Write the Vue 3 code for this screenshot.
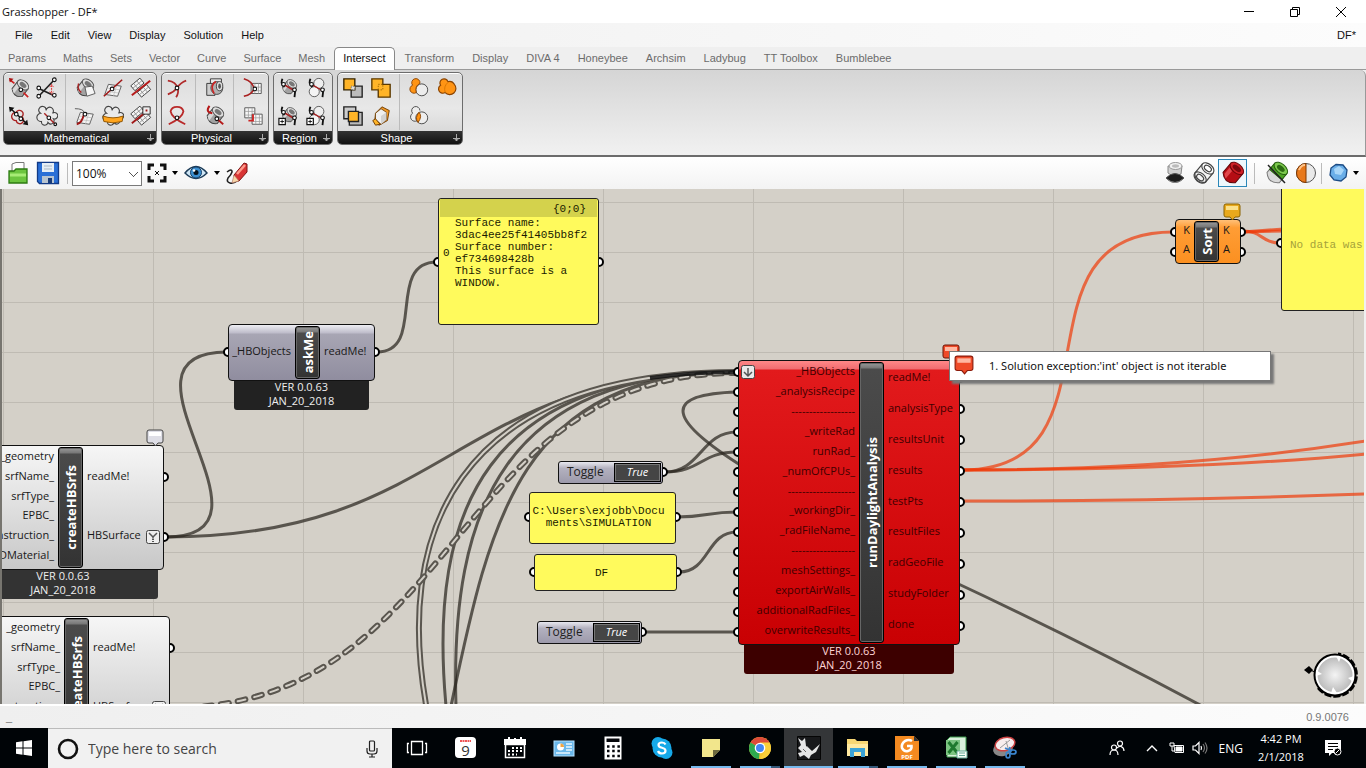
<script setup>
import { ref } from 'vue'

const menus = ['File', 'Edit', 'View', 'Display', 'Solution', 'Help']
const tabs = ['Params', 'Maths', 'Sets', 'Vector', 'Curve', 'Surface', 'Mesh', 'Intersect', 'Transform', 'Display', 'DIVA 4', 'Honeybee', 'Archsim', 'Ladybug', 'TT Toolbox', 'Bumblebee']
const activeTab = ref('Intersect')
const zoom = ref('100%')
const search = ref('')

/* Shared drawing fragments for the 24 x 24 ribbon icons */
const dot = (x, y, r = 2) => `<circle cx="${x}" cy="${y}" r="${r}" fill="#fff" stroke="#111" stroke-width="1.2"/>`
const tube = '<g transform="rotate(38 12 12)"><path d="M5 6v11q7 7 14 0V6z" fill="#a2a2a2" stroke="#444"/><path d="M6 9v8q2 2 4 3V9z" fill="#d8d8d8"/><ellipse cx="12" cy="6.500" rx="7" ry="4.500" fill="#dedede" stroke="#555"/><ellipse cx="12" cy="6.500" rx="4.200" ry="2.500" fill="#777"/></g>'
const sheet = '<path d="M7 8 L21 10 L17 21 L3 19Z" fill="#f4f4f4" stroke="#555"/><path d="M11.500 8.500 L8 20 M16 9.500 L12.500 20.500 M5.500 12 L19.500 14 M4.500 15.500 L18 17.500" stroke="#bbb" stroke-width=".8"/>'
const puff = '<path d="M5 9 a4 4 0 1 1 6 -3 a4 4 0 1 1 7 3 a3.500 3.500 0 1 1 1 6 a3.500 3.500 0 1 1 -6 4 a3.500 3.500 0 1 1 -7 -1 a3.500 3.500 0 1 1 -1 -9Z" fill="#e9e9e9" stroke="#444" stroke-width="1.200"/>'
const checks = '<g transform="rotate(50 12 12)"><path d="M3 6h7v13H3zM13 5h7v13h-7z" fill="#f5f5f5" stroke="#444"/><path d="M6.500 6v13M3 10.500h7M3 15h7M16.500 5v13M13 9.500h7M13 14h7" stroke="#8f8f8f" stroke-width=".9"/></g>'
const grid = (x, y) => `<path d="M${x} ${y}h11v11h-11z" fill="#f7f7f7" stroke="#555"/><path d="M${x + 4} ${y}v11M${x + 8} ${y}v11M${x} ${y + 4}h11M${x} ${y + 8}h11" stroke="#999" stroke-width=".8"/>`
const plus = '<path d="M1 14.500h7v7H1z" fill="#fff" stroke="#111" stroke-width="1.300"/><path d="M4.500 16v4M2.500 18h4" stroke="#111"/>'

const art = {
  lineTube: `<g transform="translate(1 1)">${tube}</g><path d="M2 3l5 4M17 17l5 5" stroke="#c22" stroke-width="1.800"/><path d="M1 1l5 1-4 4z" fill="#a11"/>${dot(14, 14)}`,
  lineLine: `<path d="M2 12L21 21M3 21L20 3" stroke="#222" stroke-width="1.800"/><path d="M17 9v9M15 11l2-3 2 3M15 16l2 3 2-3" stroke="#d22" stroke-dasharray="2 1"/>${dot(3, 12)}${dot(20, 3)}${dot(3, 21)}${dot(20, 20)}`,
  curveLine: `<path d="M9 8a4 4 0 1 1 6 5a4 4 0 1 1-6 4a4 4 0 1 1-1-9" stroke="#a22" stroke-width="1.500"/><path d="M3 4L20 20" stroke="#111" stroke-width="1.500"/><path d="M1 2l6 1-5 5zM22 22l-6-1 5-5z" fill="#111"/>${dot(9, 10)}${dot(14, 15)}`,
  puffLine: `${puff}<path d="M9 9L21 21" stroke="#a22" stroke-width="1.500"/>${dot(14, 14)}${dot(21, 21, 1.5)}`,
  tubePlane: `${tube}<path d="M12 11l8-1 3 8-9 3z" fill="#f5f5f5" stroke="#555"/><path d="M5 7q-2 6 3 10" stroke="#a22" stroke-width="1.500"/>`,
  planeLine: `${sheet}<path d="M2 21L22 3" stroke="#a01818" stroke-width="1.800"/>${dot(11, 13)}`,
  planeRegion: `${checks}<path d="M2 20L22 4" stroke="#b51a1a" stroke-width="2.200"/>`,
  planeCurve: `${sheet}<path d="M1 4Q10 4 11 8" stroke="#555"/><path d="M3 21Q9 20 11 9" stroke="#a01818" stroke-width="2"/>${dot(12, 10)}`,
  contour: `${puff}<path d="M1 12q11 4 22 0l-1 6q-10 3-20 0z" fill="#ffa51e" stroke="#8d5300"/>`,
  planeBox: `${checks}<path d="M2 20L18 7" stroke="#a01818" stroke-width="2"/><path d="M14 2h8v8h-8z" fill="#eee" stroke="#222"/><path d="M17 6h2" stroke="#a01818" stroke-width="2"/>`,
  curveCurve: `<path d="M2 4Q11 5 13 13Q14 18 11 22M22 4Q16 6 12 12Q8 17 2 19" stroke="#b02a2a" stroke-width="1.900"/>${dot(12, 12)}`,
  curveSelf: `<path d="M3 21Q18 14 19 7Q18 2 12 2Q6 2 5 7Q6 14 21 21" stroke="#b92a2a" stroke-width="2"/>${dot(12, 14)}`,
  brepBrep: `<path d="M7 2h12v14H7z" fill="#e9e9e9" stroke="#333"/><path d="M3 7h9v13H3z" fill="#cfcfcf" stroke="#333"/><ellipse cx="14" cy="12" rx="6.500" ry="7" fill="#b0b0b0" stroke="#444"/><ellipse cx="17" cy="10" rx="3.500" ry="5" fill="#ddd" stroke="#444"/><ellipse cx="17" cy="10" rx="1.500" ry="3" fill="#555"/><path d="M13 5q-7 4-2 13" stroke="#c22" stroke-width="1.800"/>`,
  brepCurve: `${tube}<path d="M6 1Q1 8 9 9" stroke="#b51a1a" stroke-width="2.200"/><path d="M14 15L21 21" stroke="#b51a1a" stroke-width="2"/>${dot(14, 15)}`,
  surfCurve: `${grid(10, 7)}<path d="M2 2Q12 5 13 13Q11 19 2 21" stroke="#a92020" stroke-width="1.800"/>${dot(14, 13)}`,
  surfSurf: `${grid(3, 3)}${grid(11, 10)}<path d="M12 10v7h-5" stroke="#c22" stroke-width="2"/>`,
  split: `<g transform="translate(2 1) scale(.85)">${tube}</g><path d="M5 2q-3 4 2 9M19 13l-1 9" stroke="#111" stroke-width="2"/><path d="M6 8l12 7" stroke="#a22" stroke-width="1.800"/>${dot(6, 8)}${dot(18, 14)}`,
  splitMulti: `<circle cx="14" cy="7" r="5.500" fill="#eee" stroke="#555"/><circle cx="9" cy="16" r="5.500" fill="#f4f4f4" stroke="#555"/><path d="M5 2q-3 4 2 9M19 13l-1 9" stroke="#111" stroke-width="2"/><path d="M6 8l12 7" stroke="#a22" stroke-width="1.500"/>${dot(6, 8)}${dot(18, 14)}`,
  diff: `<path d="M10 10h12v12H10z" fill="#bcbcbc" stroke="#222" stroke-width="1.500"/><path d="M2 2h12v12H2z" fill="#ffb427" stroke="#332200" stroke-width="1.500"/><path d="M10 10h4v4h-4z" fill="#ddd" stroke="#666" stroke-dasharray="1 1"/>`,
  union: `<path d="M2 2h12v6h8v14H9v-8H2z" fill="#ffb427" stroke="#5b3900" stroke-width="1.500"/><path d="M9 14V8h5v6z" stroke="#9a6500" stroke-dasharray="1.500 1.500"/>`,
  inter: `<path d="M2 2h13v13H2z" fill="#ccc" stroke="#222" stroke-width="1.500"/><path d="M8 8h14v14H8z" fill="#bbb" stroke="#222" stroke-width="1.500"/><path d="M7 7h11v11H7z" fill="#ffb427" stroke="#222" stroke-width="1.500"/>`,
  box: `<path d="M13 2l8 4-2 11-9 5-5-3 1-10z" fill="#f39a26" stroke="#6b3900"/><path d="M6 9l6-5 6 4v8l-6 5-6-5z" fill="#efefef" stroke="#7a4a10"/><path d="M12 12l6-4v8l-6 5z" fill="#d2d2d2"/><path d="M3 17l3-2 5 6-5 1z" fill="#ffb427" stroke="#6b3900"/>`,
  regDiff: `<circle cx="15" cy="14" r="6.500" fill="#ececec" stroke="#444"/><path d="M9 17a4.500 4.500 0 1 1-4-8a4.500 4.500 0 1 1 8-2q-6 3-4 10z" fill="#ff9414" stroke="#8a4300"/>`,
  regUnion: `<path d="M10 17a4.500 4.500 0 1 1-5-8a4.500 4.500 0 1 1 8-4a6 6 0 0 1 7 3a6.500 6.500 0 1 1-10 9z" fill="#ff9414" stroke="#8a4300" stroke-width="1.300"/><path d="M13 6q-5 4-3 11" stroke="#d77500"/>`,
  regInter: `<path d="M10 17a4.500 4.500 0 1 1-5-8a4.500 4.500 0 1 1 8-3" fill="#eee" stroke="#444"/><circle cx="15" cy="14" r="6.500" fill="#eee" stroke="#444"/><path d="M12 8q4 4-1 11q-4-5 1-11z" fill="#ff9414" stroke="#8a4300"/>`
}

const groups = [
  { name: 'Mathematical', cols: [[['lineTube', 'curveLine'], ['lineLine', 'puffLine']], [['tubePlane', 'planeCurve'], ['planeLine', 'contour'], ['planeRegion', 'planeBox']]] },
  { name: 'Physical', cols: [[['curveCurve', 'curveSelf']], [['brepBrep', 'brepCurve']], [['surfCurve', 'surfSurf']]] },
  { name: 'Region', cols: [[['split', 'splitPlus'], ['splitMulti', 'splitMultiPlus']]] },
  { name: 'Shape', cols: [[['diff', 'inter'], ['union', 'box']], [['regDiff', 'regInter'], ['regUnion']]] }
]
art.splitPlus = art.split + plus
art.splitMultiPlus = art.splitMulti + plus

/* Components on the canvas, in canvas coordinates */
const rule = '------------------'
const srfInputs = ['_geometry', 'srfName_', 'srfType_', 'EPBC_', '_EPConstruction_', '_RADMaterial_']
const nodes = [
  { id: 'ask', tone: 'violet', name: 'askMe', x: 228, y: 324, w: 147, h: 57, inW: 66, inputs: ['_HBObjects'], outputs: ['readMe!'], ver: true },
  { id: 'srf1', tone: 'plain', name: 'createHBSrfs', x: -38, y: 445, w: 202, h: 125, inW: 95, inputs: srfInputs, outputs: ['readMe!', 'HBSurface'], ver: true, graft: true, note: 'grey' },
  { id: 'srf2', tone: 'plain', name: 'createHBSrfs', x: -32, y: 616, w: 202, h: 125, inW: 95, inputs: srfInputs, outputs: ['readMe!', 'HBSurface'], ver: false, graft: true },
  { id: 'run', tone: 'red', name: 'runDaylightAnalysis', x: 738, y: 360, w: 222, h: 285, inW: 120, inputs: ['_HBObjects', '_analysisRecipe', rule, '_writeRad', 'runRad_', '_numOfCPUs_', rule + '-', '_workingDir_', '_radFileName_', rule, 'meshSettings_', 'exportAirWalls_', 'additionalRadFiles_', 'overwriteResults_'], outputs: ['readMe!', 'analysisType', 'resultsUnit', 'results', 'testPts', 'resultFiles', 'radGeoFile', 'studyFolder', 'done'], ver: true, flatten: true, note: 'orange' },
  { id: 'sort', tone: 'orange', name: 'Sort', x: 1175, y: 219, w: 66, h: 45, inW: 18, inputs: ['K', 'A'], outputs: ['K', 'A'], ver: false, note: 'yellow' }
]
const toggles = [{ x: 558, y: 461 }, { x: 537, y: 621 }]
const box = (n) => ({ left: n.x + 'px', top: n.y + 'px', width: n.w + 'px', height: n.h + 'px' })
const spot = (n) => ({ left: n.x + 'px', top: n.y + 'px' })

const wires = [
  'M377 352C427 352 385 262 437 262',
  'M166 537C295 537 97 352 227 352',
  'M166 537C452 537 451 372 737 372',
  'M446 706C428 510 486 372 737 372',
  'M456 706C450 509 504 372 737 372',
  'M451 706C490 520 520 372 737 372',
  'M665 472C701 472 701 432 737 432',
  'M665 472C701 472 701 452 737 452',
  'M737 392C700 393 683 400 683 411C683 424 708 445 745 468',
  'M950 580C1040 622 1120 662 1202 706',
  'M677 517C707 517 707 512 737 512',
  'M679 572C710 572 706 532 737 532',
  'M645 632H737'
]
const hotWires = [
  'M962 470C1130 470 1005 232 1173 232',
  'M962 470C1110 470 1240 461 1366 441',
  'M962 470C1110 470 1240 466 1366 454',
  'M962 501C1110 501 1230 499 1366 494',
  'M1243 231C1262 231 1262 243 1280 243',
  'M1243 232L1284 229',
  'M1243 232L1284 231'
]
const ports = [
  [228, 352], [375, 352], [438, 262], [599, 262], [164, 477], [164, 537], [170, 648],
  [529, 517], [676, 517], [534, 572], [677, 572], [663, 472], [642, 632],
  ...Array.from({ length: 14 }, (_, i) => [738, 372 + i * 20]),
  ...Array.from({ length: 9 }, (_, i) => [960, 378 + i * 31]),
  [1175, 232], [1175, 252], [1241, 232], [1241, 252], [1281, 243]
]

const apps = [
  { name: 'Task view', art: '<g stroke="#fff" stroke-width="1.300"><path d="M6.500 5.500h11v13h-11zM4 7.500H2.500v9H4M20 7.500h1.500v9H20"/></g>' },
  { name: 'Calendar', art: '<rect x="1" y="1" width="21" height="21" rx="4" fill="#fff"/><path d="M6 5h11" stroke="#e55" stroke-width="2" stroke-dasharray="2 .5"/><text x="11.500" y="20" text-anchor="middle" font-family="Open Sans, sans-serif" font-size="15" fill="#333">9</text>' },
  { name: 'Planner', art: '<path d="M2.500 8.500h19v13h-19z" stroke="#fff" stroke-width="1.500"/><path d="M2 4h20v4H2zM6 1v4M12 2v4M18 1v4" fill="#fff" stroke="#fff" stroke-width="2"/><path d="M9 12h10M5 15h14M5 18.500h9" stroke="#fff" stroke-width="2" stroke-dasharray="2 2"/>' },
  { name: 'Control panel', art: '<rect x="2" y="5" width="20" height="15" fill="#6bb8ea" stroke="#b5e2ff"/><circle cx="8.500" cy="11" r="3.500" fill="#fff"/><path d="M8.500 11V7.500a3.500 3.500 0 0 1 3.500 3.500z" fill="#f2a541"/><path d="M14 8h6M14 11h6M14 14h6M4 17h14" stroke="#e9f6ff" stroke-width="1.300"/>' },
  { name: 'Calculator', art: '<path d="M3.500.500h17v23h-17z" fill="#fff"/><path d="M5.500 2.500h13v3.500h-13z" fill="#05070b"/><path d="M6 10.500h13M6 15h13M6 20h13" stroke="#05070b" stroke-width="2.500" stroke-dasharray="2.500 2.700"/>' },
  { name: 'Skype', art: '<circle cx="8" cy="7.500" r="6.500" fill="#16a9e8"/><circle cx="16" cy="16.500" r="6.500" fill="#16a9e8"/><circle cx="12" cy="12" r="9.500" fill="#16a9e8"/><path d="M15.500 8.500q-1-2-3.500-2q-3.500 0-3.500 2.500q0 2 3.500 2.800q3.500.800 3.500 3q0 2.700-3.500 2.700q-3 0-4-2.500" stroke="#fff" stroke-width="2.200"/>' },
  { name: 'Sticky notes', open: true, art: '<path d="M3 3h18v11l-7 7H3z" fill="#f2e68c"/><path d="M14 21v-7h7z" fill="#6d693d"/>' },
  { name: 'Chrome', open: true, multi: true, art: '<circle cx="12" cy="12" r="11" fill="#f4c430"/><path d="M12 12L2.500 6.500A11 11 0 0 1 21.500 6.500z" fill="#dd4b39"/><path d="M12 12L2.500 6.500A11 11 0 0 0 11 23z" fill="#2da94f"/><path d="M12 6.500h9.500A11 11 0 0 1 12 23l5-8z" fill="#f9cf3a"/><circle cx="12" cy="12" r="5.300" fill="#fff"/><circle cx="12" cy="12" r="4" fill="#4285f4"/>' },
  { name: 'Rhinoceros', open: true, active: true, art: '<path d="M.500.500h23v23H.500z" fill="#18191b" stroke="#050505"/><path d="M1 2l4 3 3-3 1 8 3 2 3 3 8-7-4 8-5 3-2 4-5-4-4 2-2-4 4-1-4-4 3-3z" fill="#e6e6e6"/><path d="M6 13l3 3M10 10l4 4" stroke="#666"/>' },
  { name: 'File Explorer', open: true, multi: true, art: '<path d="M1 3h8l2 2h11v15H1z" fill="#f7d774"/><path d="M1 8h21v12H1z" fill="#ffe9a0"/><path d="M4 12h15v9h-4v-5H8v5H4z" fill="#3ba3d6"/>' },
  { name: 'Foxit PDF', open: true, art: '<path d="M0 0h19l5 5v19H0z" fill="#f48a20"/><path d="M19 0v5h5z" fill="#333"/><path d="M17 5q-3-2-7 0q-4 3-3 7q2 4 6 3q4-1 3.500-5H12" stroke="#fff" stroke-width="2.600"/><text x="12" y="23" text-anchor="middle" font-family="Open Sans, sans-serif" font-size="6" font-weight="700" fill="#fff">PDF</text>' },
  { name: 'Excel', open: true, art: '<path d="M6 1h16v20H3V4z" fill="#d9f0dc" stroke="#3d9a4c"/><path d="M2 4h14v15H2z" fill="#7cc481"/><path d="M4.500 6l9 11M13.500 6l-9 11" stroke="#1f7a2e" stroke-width="3"/><path d="M13 15h10v7H13z" fill="#f7fff7" stroke="#6a9"/><path d="M15 17h6M15 19.500h6" stroke="#6a9"/>' },
  { name: 'Snipping tool', open: true, art: '<ellipse cx="10" cy="13" rx="10" ry="7" fill="#888" transform="rotate(-15 10 13)"/><ellipse cx="12" cy="8" rx="10" ry="6.500" fill="#f8eeee" stroke="#c44" stroke-width="1.500" transform="rotate(-15 12 8)"/><path d="M7 12l10-8M13 5l3 10" stroke="#999"/><g stroke="#3a86d0" stroke-width="1.700"><ellipse cx="15" cy="19" rx="2" ry="3"/><ellipse cx="20" cy="16" rx="3" ry="2"/><path d="M12 12l7 3M16 16l1-5"/></g>' }
]
</script>

<template>
  <div class="app">
    <header class="titlebar">
      <span class="title">Grasshopper - DF*</span>
      <div class="winbtns">
        <button aria-label="Minimize"><svg width="12" height="12" fill="none" stroke="#000"><path d="M1 5.500h10" /></svg></button>
        <button aria-label="Restore"><svg width="12" height="12" fill="none" stroke="#000"><path d="M1.500 3.500h7v7h-7zM3.500 3.500v-2h7v7h-2" /></svg></button>
        <button aria-label="Close"><svg width="12" height="12" fill="none" stroke="#000"><path d="M1 1l10 10M11 1L1 11" /></svg></button>
      </div>
    </header>
    <nav class="menubar">
      <button v-for="m in menus" :key="m">{{ m }}</button>
      <span class="doc">DF*</span>
    </nav>
    <nav class="tabs">
      <button v-for="t in tabs" :key="t" :class="{ on: t === activeTab }" @click="activeTab = t">{{ t }}</button>
    </nav>

    <section class="ribbon">
      <div v-for="g in groups" :key="g.name" class="group">
        <div class="icons">
          <div v-for="(set, i) in g.cols" :key="i" class="set">
            <div v-for="(col, j) in set" :key="j" class="col">
              <button v-for="k in col" :key="k" :aria-label="k"><svg viewBox="0 0 24 24" fill="none" v-html="art[k]"></svg></button>
            </div>
          </div>
        </div>
        <div class="caption"><span>{{ g.name }}</span><svg width="7" height="8" fill="none" stroke="#aaa"><path d="M3.500 0v7M1 4l2.500 3L6 4M0 4.500h7" /></svg></div>
      </div>
    </section>

    <section class="toolbar">
      <button aria-label="Open file" class="b28"><svg width="22" height="24" fill="none"><path d="M5 12V3l4-1.500h8V12" fill="#fff" stroke="#777" /><path d="M2 10h5l2-2h11v14H2z" fill="#6cc53f" stroke="#2c7a12" stroke-width="1.300" /><path d="M3 14h16" stroke="#a7ec76" stroke-width="3" /></svg></button>
      <button aria-label="Save file" class="b28"><svg width="24" height="24" fill="none"><path d="M1.500 1.500h21v21h-19l-2-2z" fill="#2a6fd6" stroke="#123a86" stroke-width="1.300" /><path d="M6 2h12v9H6z" fill="#e6eef5" /><path d="M8 5h8M8 8h8" stroke="#a9b7c4" /><path d="M6 15h12v7H6z" fill="#b8c4d0" /><path d="M12 17h4v5h-4z" fill="#173a78" /></svg></button>
      <i class="sep"></i>
      <select v-model="zoom" aria-label="Zoom level"><option>100%</option><option>50%</option></select>
      <button aria-label="Zoom extents" class="b28"><svg width="20" height="20" fill="none" stroke="#111" stroke-width="3"><path d="M2 7V2h5M13 2h5v5M18 13v5h-5M7 18H2v-5" /><path d="M8 8l4 4M12 8l-4 4" stroke-width="1" /></svg></button>
      <svg class="drop" width="6" height="4"><path d="M0 0h6L3 4z" /></svg>
      <button aria-label="Named views" class="eye"><svg width="24" height="18" fill="none"><path d="M1 9Q12-4 23 9Q12 20 1 9z" fill="#cfe6f5" stroke="#1d3c58" stroke-width="1.500" /><circle cx="12" cy="8.500" r="5.500" fill="#3b8fd0" stroke="#163f68" /><circle cx="12" cy="8.500" r="2.500" fill="#06121d" /><circle cx="10" cy="6.500" r="1.300" fill="#fff" /></svg></button>
      <svg class="drop" width="6" height="4"><path d="M0 0h6L3 4z" /></svg>
      <button aria-label="Sketch" class="sketch"><svg width="24" height="24" fill="none"><path d="M2 11q5-4 5 0q-1 3-4 6q-2 4 2 5q4 1 8-3" stroke="#222" stroke-width="1.600" /><path d="M9 14L19 2l3 1v8l-8 9-4 0z" fill="#d93535" stroke="#7d1515" /><path d="M12 13L20 4" stroke="#ff9a8a" stroke-width="2.500" /><path d="M9 14l5 6-7 2z" fill="#f7d7a8" stroke="#a65" stroke-width=".6" /></svg></button>
      <div class="right">
        <button aria-label="No preview"><svg width="24" height="24" fill="none"><path d="M5 5v7l6 4 7-3 1-8z" fill="#d2d2d2" stroke="#888" /><ellipse cx="12.500" cy="5" rx="6.500" ry="3.500" fill="#f1f1f1" stroke="#999" /><ellipse cx="12.500" cy="5" rx="3.500" ry="1.700" fill="#bbb" /><path d="M3 17q9-9 18 0q-9 9-18 0z" fill="#1d1d1d" stroke="#555" /><path d="M5 19q7 5 14 0" stroke="#888" /></svg></button>
        <button aria-label="Wireframe preview"><svg width="24" height="24" fill="none" stroke="#444" stroke-width="1.200"><g transform="rotate(40 12 12)"><path d="M5 6v12q7 8 14 0V6" fill="#f4f4f4" /><ellipse cx="12" cy="6" rx="7" ry="4.500" fill="#fff" /><ellipse cx="12" cy="6" rx="4" ry="2.500" /><ellipse cx="12" cy="18" rx="7" ry="4.500" /><ellipse cx="12" cy="18" rx="4" ry="2.500" /></g></svg></button>
        <button aria-label="Shaded preview" class="picked"><svg width="24" height="24" fill="none"><g transform="rotate(40 12 12)"><path d="M4 6v12q8 8 16 0V6z" fill="#b50d14" stroke="#5e0408" /><path d="M6 10v8q2 2 4 3V11z" fill="#e0484d" /><ellipse cx="12" cy="6" rx="8" ry="4.500" fill="#cf2027" stroke="#6b0509" /><ellipse cx="12" cy="6" rx="5" ry="2.500" fill="#7c080d" /></g></svg></button>
        <i class="sep"></i>
        <button aria-label="Selected only"><svg width="24" height="24" fill="none"><g transform="rotate(40 12 12)"><path d="M4 12v6q8 8 16 0v-6z" fill="#d9d9d9" stroke="#777" /><path d="M4 6v8h16V6z" fill="#4da324" stroke="#265f0d" /><ellipse cx="12" cy="6" rx="8" ry="4.500" fill="#7cc94d" stroke="#265f0d" /><ellipse cx="12" cy="6" rx="4.500" ry="2.500" fill="#2d6b12" /></g><path d="M3 4l17 18" stroke="#222" stroke-width="1.500" /></svg></button>
        <button aria-label="Document preview"><svg width="22" height="22" fill="none"><circle cx="11" cy="11" r="9.500" fill="#e9e9e9" stroke="#555" /><path d="M11 1.500a9.500 9.500 0 0 0 0 19z" fill="#e8791c" stroke="#803800" /><path d="M4 8q2-5 6-5" stroke="#ffc58c" stroke-width="2" /></svg></button>
        <i class="sep tight"></i>
        <button aria-label="Mesh quality"><svg width="20" height="20" fill="none"><path d="M7 1.500l7 .5 4 5-1 7-5 4-7-1-4-5 1-7z" fill="#6aaee8" stroke="#1c4c85" stroke-width="1.300" /><path d="M5 6l5-3 5 4-3 5-6-1z" fill="#a8d6f8" /></svg></button>
        <svg class="drop" width="6" height="4"><path d="M0 0h6L3 4z" /></svg>
      </div>
    </section>

    <main class="canvas">
      <div class="world">
        <svg class="wires" width="1366" height="768" fill="none">
          <g stroke="#2a261f" stroke-opacity=".72" stroke-width="3"><path v-for="d in wires" :key="d" :d="d" /></g>
          <path class="pipe" d="M427 710C395 540 450 372 737 372" /><path class="core" d="M427 710C395 540 450 372 737 372" />
          <path class="pipe link" d="M170 708C460 708 450 373 737 373" /><path class="core link" d="M170 708C460 708 450 373 737 373" />
          <path d="M650 378Q694 372 737 372" stroke="#111" stroke-opacity=".85" stroke-width="4" />
          <g stroke="#f03a08" stroke-opacity=".7" stroke-width="3"><path v-for="d in hotWires" :key="d" :d="d" /></g>
          <g fill="#fff" stroke="#000" stroke-width="2"><circle v-for="(p, i) in ports" :key="i" :cx="p[0]" :cy="p[1]" r="4" /></g>
        </svg>

        <article v-for="n in nodes" :key="n.id" class="node" :class="n.tone" :style="box(n)">
          <div class="body">
            <div class="ins" :style="{ width: n.inW + 'px' }"><span v-for="(t, i) in n.inputs" :key="i">{{ t }}</span></div>
            <div class="core-name"><b>{{ n.name }}</b></div>
            <div class="outs"><span v-for="t in n.outputs" :key="t">{{ t }}</span></div>
          </div>
          <div v-if="n.ver" class="ver">VER 0.0.63<br>JAN_20_2018</div>
          <svg v-if="n.flatten" class="flatten" width="14" height="14" fill="none"><rect x=".5" y=".5" width="13" height="13" rx="2" fill="#e9e9e9" stroke="#444" /><path d="M7 3v8M3 7l4 4 4-4" stroke="#555" stroke-width="1.500" /></svg>
          <svg v-if="n.graft" class="graft" width="14" height="14" fill="none"><rect x=".5" y=".5" width="13" height="13" rx="2" fill="#eee" stroke="#444" /><path d="M3 3l4 4 4-4" stroke="#555" stroke-width="1.500" /><path d="M7 6v6" stroke="#555" stroke-width="2" stroke-dasharray="1.500 1" /></svg>
          <svg v-if="n.note" class="balloon" :class="n.note" width="18" height="18"><path d="M3 1h12a2 2 0 0 1 2 2v9a2 2 0 0 1-2 2h-3l-2.500 3L7 14H3a2 2 0 0 1-2-2V3a2 2 0 0 1 2-2z" /><path class="shine" d="M3 3h12v4H3z" /></svg>
        </article>

        <button v-for="t in toggles" :key="t.x" class="toggle" :style="spot(t)"><span>Toggle</span><em>True</em></button>

        <div class="panel p1">
          <div class="path">{0;0}</div>
          <div class="entry"><span class="idx">0</span><p>Surface name:<br>3dac4ee25f41405bb8f2<br>Surface number:<br>ef734698428b<br>This surface is a<br>WINDOW.</p></div>
        </div>
        <div class="panel p2">C:\Users\exjobb\Docu<br>ments\SIMULATION</div>
        <div class="panel p3">DF</div>
        <div class="panel p4">No data was</div>

        <div class="tip" role="tooltip">
          <svg width="20" height="20" viewBox="0 0 18 18"><path d="M3 1h12a2 2 0 0 1 2 2v9a2 2 0 0 1-2 2h-3l-2.500 3L7 14H3a2 2 0 0 1-2-2V3a2 2 0 0 1 2-2z" fill="#ef4a28" stroke="#8b1b0b" /><path d="M3 3h12v4H3z" fill="#ffb8a2" /></svg>
          <span>1. Solution exception:'int' object is not iterable</span>
        </div>
      </div>
      <svg class="compass" width="54" height="46" fill="none">
        <defs><radialGradient id="knob"><stop offset="0" stop-color="#f4f4f4" /><stop offset="1" stop-color="#b9b9b9" /></radialGradient></defs>
        <path d="M0 18l5-4 4 4-4 4z" fill="#000" /><path d="M6 18l5 2" stroke="#000" />
        <circle cx="31" cy="23" r="20" stroke="#000" stroke-width="3" /><path d="M14 36A21.500 21.500 0 1 0 34 1.700" stroke="#000" stroke-width="2.500" stroke-dasharray="7 2" />
        <circle cx="31" cy="23" r="18.500" fill="url(#knob)" stroke="#fff" stroke-width="2" />
        <path d="M32 4l5 1-2 5zM12 18l6 4-6 2zM50 24l-6 2 5 4zM27 41l2-6 4 6z" fill="#fff" />
      </svg>
    </main>

    <footer class="status"><span>_</span><span class="version">0.9.0076</span></footer>

    <footer class="taskbar">
      <button class="start" aria-label="Start"><svg width="16" height="16" fill="#fff"><path d="M0 2.300L6.500 1.300V7.500H0zM7.500 1.200L16 0v7.500H7.500zM0 8.500h6.500v6.200L0 13.700zM7.500 8.500H16V16l-8.500-1.200z" /></svg></button>
      <label class="search">
        <svg width="22" height="22" fill="none"><circle cx="11" cy="11" r="9" stroke="#111" stroke-width="2.600" /></svg>
        <input v-model="search" type="text" placeholder="Type here to search" aria-label="Type here to search">
        <svg width="12" height="18" fill="none" stroke="#222" stroke-width="1.200"><rect x="3.500" y="1" width="5" height="10" rx="1" /><path d="M1 8v3q0 3 3 3h4q3 0 3-3V8M6 14v3M3 17h6" /></svg>
      </label>
      <button v-for="a in apps" :key="a.name" class="task" :class="{ open: a.open, active: a.active, multi: a.multi }" :aria-label="a.name"><svg width="24" height="24" viewBox="0 0 24 24" fill="none" v-html="a.art"></svg></button>
      <div class="tray">
        <svg class="people" width="16" height="16" fill="none" stroke="#fff" stroke-width="1.200"><circle cx="11" cy="3.500" r="2.500" /><circle cx="5" cy="7.500" r="2.500" /><path d="M1 15q0-5 4-5t4 5M8 8q2-2 4-1.500q3 1 3 4.500" /></svg>
        <svg class="chev" width="12" height="8" fill="none" stroke="#fff" stroke-width="1.400"><path d="M1 7l5-5 5 5" /></svg>
        <svg class="bat" width="16" height="12" fill="none" stroke="#fff"><path d="M5 3.500h9.500v7H6z" /><path d="M7 5h6v4H7z" fill="#fff" /><path d="M1 1v3h4V1M2 0v2M4 0v2M3 4v5h3" /></svg>
        <svg class="vol" width="16" height="14" fill="none" stroke="#fff" stroke-width="1.200"><path d="M1 5h2.500L7 1.500v11L3.500 9H1z" /><path d="M9 5q1 2 0 4" /><path d="M11 3q3 4 0 8M13 1.500q4 5.500 0 11" stroke="#777" /></svg>
        <span class="lang">ENG</span>
        <time>4:42 PM<br>2/1/2018</time>
        <svg class="msg" width="18" height="18" fill="none"><path d="M1 1h16v13H8l-3 3v-3H1z" fill="#fff" /><path d="M4 4.500h10M4 7.500h10M4 10.500h5" stroke="#000" /><circle cx="13.500" cy="12.500" r="3.500" fill="#000" stroke="#fff" /><path d="M11.500 14.500l4-4" stroke="#fff" /></svg>
      </div>
    </footer>
  </div>
</template>

<style>
html, body { margin: 0; height: 100%; overflow: hidden; }
</style>

<style scoped>
.app { display: flex; flex-direction: column; height: 100vh; background: #f0f0f0; font: 11px "Liberation Sans", Arial, sans-serif; color: #111; }
button { border: 0; background: none; padding: 0; margin: 0; font: inherit; color: inherit; display: flex; align-items: center; justify-content: center; }
svg { display: block; flex: none; }
.titlebar { height: 23px; background: #fff; display: flex; justify-content: space-between; align-items: center; font: 11px "Open Sans", sans-serif; padding-left: 2px; }
.winbtns { display: flex; padding-right: 2px; height: 21px; }
.winbtns button { width: 46px; }
.menubar { height: 24px; display: flex; align-items: center; padding: 0 10px 0 6px; background: linear-gradient(90deg, #efefef, #fcfcfc); }
.menubar button { padding: 0 9px; }
.doc { margin-left: auto; }
.tabs { height: 22px; display: flex; align-items: stretch; background: #efefef; color: #6c6c6c; border-bottom: 1px solid #999; }
.tabs button { padding: 0 9px 0 8px; }
.tabs .on { color: #111; background: #fff; border: 1px solid #888; border-bottom: 0; border-radius: 5px 5px 0 0; padding: 0 9px 3px 8px; margin-bottom: -1px; }
.tabs .on ~ button { padding: 0 9px; }
.ribbon { height: 87px; display: flex; align-items: flex-start; gap: 4px; padding: 2px 3px 0; box-sizing: border-box; background: linear-gradient(#d5d5d5, #f1f1f1); border-bottom: 2px solid #6c6c6c; border-right: 1px solid #999; border-radius: 0 6px 0 0; }
.group { border: 1px solid #6d6d6d; border-radius: 5px; overflow: hidden; background: linear-gradient(#dcdcdc, #e8e8e8 50%, #d2d2d2); box-shadow: inset 0 1px #fff; }
.icons { display: flex; padding: 1px; }
.set { display: flex; }
.set + .set { margin-left: 4px; padding-left: 5px; border-left: 1px solid #bbb; }
.col { width: 28px; }
.col button { width: 28px; height: 28px; }
.col svg { width: 22px; height: 22px; }
.caption { height: 13px; background: linear-gradient(#333, #111); color: #fff; display: flex; align-items: center; padding: 0 2px; }
.caption span { flex: 1; text-align: center; }
.toolbar { height: 32px; display: flex; align-items: center; background: linear-gradient(#fff, #f3f3f3); padding: 0 7px 0 3px; }
.b28 { width: 30px; height: 28px; }
.sep { width: 1px; height: 21px; background: #bbb; margin: 0 4px; }
.toolbar select { width: 70px; height: 25px; border: 1px solid #7a7a7a; border-radius: 0; appearance: none; padding: 0 3px; color: #111; font: 12px "Open Sans", sans-serif; background-color: #fff; background-image: linear-gradient(-45deg, transparent 42%, #555 42%, #555 58%, transparent 58%), linear-gradient(45deg, transparent 42%, #555 42%, #555 58%, transparent 58%); background-repeat: no-repeat; background-position: 60px 10px, 56px 10px; background-size: 5px 5px; }
.eye { width: 36px; }
.sketch { width: 34px; }
.right { margin-left: auto; display: flex; align-items: center; }
.right button { width: 29px; height: 28px; }
.right .picked { outline: 1px solid #2b87b8; outline-offset: -1px; background: #eef7fc; }
.right .sep { margin: 0 7px; }
.right .tight { margin: 0 2px 0 1px; }
.canvas { flex: 1; min-height: 0; position: relative; overflow: hidden; margin-right: 2px; border-left: 2px solid #77756f; background-color: #d4d0c8; background-image: linear-gradient(90deg, #bfbbb3 1px, transparent 1px), linear-gradient(#bfbbb3 1px, transparent 1px); background-size: 150px 50px; background-position: 1px 13px; }
.world { position: absolute; left: -2px; top: -189px; width: 1366px; height: 768px; }
.wires { position: absolute; left: 0; top: 0; }
.pipe { stroke: #5a564f; stroke-width: 6; }
.core { stroke: #d4d0c8; stroke-width: 2; }
.link { stroke-dasharray: 8 9; stroke-linecap: round; }
.node { position: absolute; font: 11px "Open Sans", sans-serif; color: #181818; }
.body { position: relative; z-index: 1; box-sizing: border-box; height: 100%; display: flex; border: 1px solid #111; border-radius: 4px; padding: 1px 0; }
.plain .body { background: linear-gradient(#f6f6f6, #c8c8c8); }
.violet .body { background: linear-gradient(#eeeef4, #bcbac8 15%, #a8a6b4 16%, #908d9f); }
.red .body { background: linear-gradient(#f88 0, #f06c70 8px, #e21a1c 9px, #c90003); color: #400000; }
.orange .body { background: linear-gradient(#ffc078, #ff9d35 18%, #fb9021); }
.ins, .outs { display: flex; flex-direction: column; white-space: nowrap; }
.ins { flex: none; box-sizing: border-box; padding: 0 4px 3px 0; align-items: flex-end; }
.outs { flex: 1; padding: 0 4px 3px; }
.ins span, .outs span { flex: 1; display: flex; align-items: center; padding-bottom: 2px; }
.core-name { width: 23px; flex: none; border: 1px solid #000; border-radius: 3px; background: linear-gradient(#999, #777 5px, #4b4b4b 6px, #333); color: #fff; display: flex; align-items: center; justify-content: center; box-shadow: inset 0 0 0 1px #666; }
.core-name b { writing-mode: vertical-rl; transform: rotate(180deg); font-size: 13px; white-space: nowrap; }
.ver { position: absolute; z-index: 0; left: 6px; right: 6px; top: 100%; height: 29px; margin-top: -1px; padding-bottom: 1px; background: #222; color: #eee; text-align: center; line-height: 14px; border-radius: 0 0 3px 3px; }
.plain .ver { background: #333; }
.red .ver { background: #3d0000; color: #ffd4d4; }
.flatten { position: absolute; z-index: 2; left: 3px; top: 5px; }
.graft { position: absolute; z-index: 2; right: 4px; top: 85px; }
.balloon { position: absolute; z-index: 0; right: 0; top: -16px; fill: #dedee6; stroke: #444; }
.balloon .shine { stroke: none; fill: #fff; }
.orange.balloon { fill: #ef4a28; stroke: #6b1407; }
.orange.balloon .shine { fill: #ffb8a2; }
.yellow.balloon { fill: #e9a91c; stroke: #8a6200; }
.yellow.balloon .shine { fill: #fbe08a; }
.grey.balloon, .yellow.balloon { z-index: 2; }
.toggle { position: absolute; width: 105px; height: 23px; box-sizing: border-box; border: 1px solid #111; border-radius: 3px; background: linear-gradient(#e8e8ef, #b3b1bf 30%, #9d9aab); font: 12px/18px "Open Sans", sans-serif; justify-content: space-between; padding: 0 1px 2px 8px; color: #222; }
.toggle em { width: 47px; height: 19px; margin-top: 2px; box-sizing: border-box; border: 1px solid #000; background: #454545; box-shadow: inset 0 0 0 1px #777; color: #fff; line-height: 16px; text-align: center; font-size: 11px; }
.panel { position: absolute; box-sizing: border-box; border: 1px solid #222; border-radius: 3px; background: #fffa5c; font: 11px/12px "Liberation Mono", "Courier New", monospace; color: #1a1a00; display: flex; align-items: center; justify-content: center; text-align: center; }
.p1 { left: 438px; top: 198px; width: 161px; height: 127px; display: block; text-align: left; }
.path { height: 18px; line-height: 20px; margin: 0 1px; text-align: right; padding-right: 11px; background: #d4d24c; }
.entry { display: flex; align-items: center; gap: 3px; padding-left: 4px; }
.entry p { margin: 0; }
.idx { width: 9px; }
.p2 { left: 529px; top: 492px; width: 147px; height: 52px; padding: 0 8px 2px 0; }
.p3 { left: 534px; top: 554px; width: 143px; height: 37px; padding-right: 8px; }
.p4 { left: 1281px; top: 178px; width: 160px; height: 133px; color: #a5a23a; justify-content: flex-start; padding-left: 8px; }
.tip { position: absolute; left: 949px; top: 351px; width: 322px; height: 30px; box-sizing: border-box; z-index: 5; border: 1px solid #777; background: #fff; display: flex; align-items: center; gap: 15px; padding: 0 0 2px 4px; font: 11px "Noto Sans", sans-serif; box-shadow: 3px 3px 2px #777; white-space: nowrap; }
.compass { position: absolute; right: 6px; bottom: 6px; }
.status { height: 24px; display: flex; align-items: center; justify-content: space-between; padding: 0 17px 0 6px; box-sizing: border-box; border-top: 2px solid #fff; background: linear-gradient(90deg, #efefef, #fcfcfc); color: #777; }
.taskbar { height: 40px; display: flex; background: #000407; font-family: "Open Sans", sans-serif; color: #fff; }
.start { width: 48px; flex: none; }
.search { width: 344px; flex: none; box-sizing: border-box; display: flex; align-items: center; background: #f1f1f1; padding: 0 14px 0 9px; gap: 9px; border-top: 1px solid #bbb; }
.search input { flex: 1; min-width: 0; border: 0; background: none; padding: 0; outline: 0; font: 14px "Open Sans", sans-serif; color: #333; }
.search input::placeholder { color: #444; opacity: 1; }
.task { width: 49px; flex: none; position: relative; }
.task.active { background: #343638; }
.task.open::after { content: ""; position: absolute; left: 5px; right: 4px; bottom: 0; height: 2px; background: #76b9ed; }
.task.multi::after { background: linear-gradient(90deg, #76b9ed 31px, #35597a 31px); }
.task.active::after { left: 0; right: 0; }
.tray { margin-left: auto; display: flex; align-items: center; padding-right: 24px; font-size: 12px; }
.chev { margin-left: 21px; }
.bat { margin-left: 11px; }
.vol { margin-left: 7px; }
.lang { margin-left: 11px; }
.tray time { width: 76px; text-align: center; line-height: 18px; font-size: 11px; }
.msg { margin-left: 5px; }
</style>
